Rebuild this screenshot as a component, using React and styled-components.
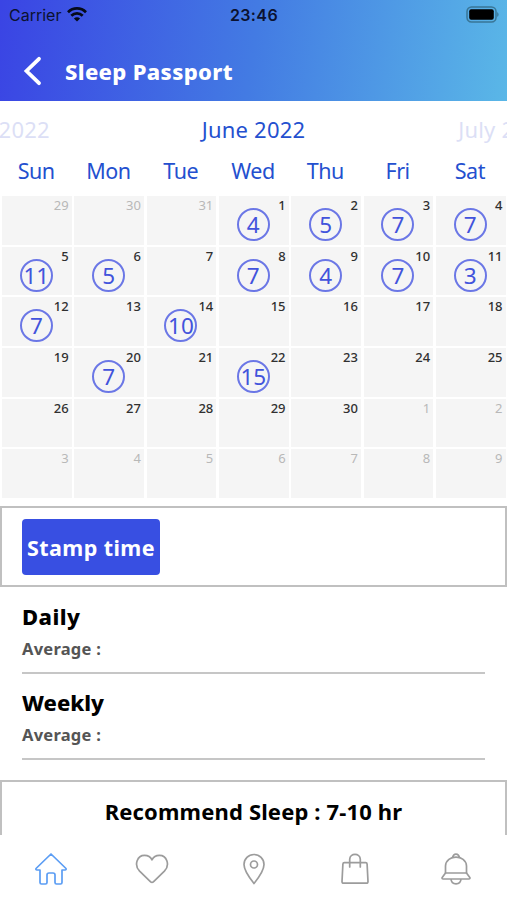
import styled, { createGlobalStyle } from 'styled-components';

const GlobalStyle = createGlobalStyle`
  * {
    box-sizing: border-box;
  }

  body {
    margin: 0;
    background-color: #fff;
    font-family: 'Noto Sans', sans-serif;
  }
`;

const Screen = styled.div`
  display: flex;
  flex-direction: column;
  width: 507px;
  height: 900px;
  overflow: hidden;
`;

const Header = styled.header`
  height: 101px;
  flex-shrink: 0;
  background: linear-gradient(98deg, #3a44e4 0%, #437be3 50%, #5ab7e7 100%);
`;

const StatusBar = styled.div`
  display: grid;
  grid-template-columns: 1fr auto 1fr;
  align-items: center;
  height: 30px;
  padding: 0 8px 0 9px;
  font-family: Inter, sans-serif;
  font-size: 16px;
  line-height: 30px;
  color: #0b1230;
`;

const Carrier = styled.div`
  display: flex;
  align-items: center;
  gap: 6px;
`;

const Clock = styled.span`
  font-weight: 600;
  letter-spacing: 0.4px;
`;

const BatteryIcon = styled.svg`
  justify-self: end;
`;

const TitleBar = styled.div`
  display: flex;
  align-items: center;
  height: 82px;
  padding-left: 23px;
  gap: 23px;
`;

const Title = styled.h1`
  margin: 0;
  color: #fff;
  font-size: 22px;
  font-weight: 800;
  line-height: 30px;
  letter-spacing: 0.35px;
`;

const Months = styled.div`
  display: grid;
  grid-template-columns: 1fr auto 1fr;
  height: 59px;
  flex-shrink: 0;
  font-size: 22px;
  line-height: 57px;
  letter-spacing: 0.2px;
  white-space: nowrap;
  overflow: hidden;
`;

const Month = styled.span`
  color: ${(p) => (p.$current ? '#2450cf' : '#dcdff6')};
  min-width: 0;
`;

const PrevMonth = styled(Month)`
  display: flex;
  justify-content: flex-end;
  padding-right: 152px;
`;

const NextMonth = styled(Month)`
  padding-left: 153px;
`;

const WeekRow = styled.div`
  display: grid;
  grid-template-columns: repeat(7, 1fr);
  height: 36px;
  flex-shrink: 0;
  padding-right: 1px;
  color: #2450cf;
  font-size: 21.5px;
  line-height: 22px;
  letter-spacing: -0.5px;
  text-align: center;
`;

const Days = styled.div`
  display: grid;
  grid-template-columns: repeat(7, 1fr);
  grid-template-rows: repeat(6, 1fr);
  gap: 2.2px 2.7px;
  height: 302px;
  flex-shrink: 0;
  padding: 0 1.5px 0 2px;
`;

const Day = styled.div`
  display: flex;
  flex-direction: column;
  background-color: #f5f5f5;
  min-height: 0;
`;

const DayNumber = styled.span`
  align-self: flex-end;
  height: 12px;
  padding-right: 3px;
  font-size: 13px;
  font-weight: ${(p) => (p.$muted ? 400 : 500)};
  line-height: 18px;
  color: ${(p) => (p.$muted ? '#b8b8b8' : '#303030')};
`;

const Hours = styled.span`
  display: flex;
  align-items: center;
  justify-content: center;
  align-self: center;
  width: 33px;
  height: 33px;
  flex-shrink: 0;
  border: 2px solid #6b77e6;
  border-radius: 50%;
  color: #4253dc;
  font-size: 22.5px;
  line-height: 29px;
  margin-right: 1px;
`;

const StampBox = styled.section`
  height: 81px;
  flex-shrink: 0;
  margin-top: 8px;
  padding: 11px 20px;
  border: 2px solid #c0c0c0;
`;

const StampButton = styled.button`
  display: block;
  width: 138px;
  height: 56px;
  padding: 1px 0 0;
  border: 0;
  border-radius: 4px;
  background-color: #384fe2;
  color: #fff;
  font-family: inherit;
  font-size: 21.5px;
  font-weight: 700;
  letter-spacing: 0.4px;
`;

const Averages = styled.div`
  padding: 0 22px;
  height: 193px;
  flex-shrink: 0;
`;

const Average = styled.section`
  height: ${(p) => p.$height}px;
  border-bottom: 2px solid #c6c6c6;
`;

const AverageTitle = styled.h2`
  margin: 0;
  padding-top: ${(p) => p.$top}px;
  color: #000;
  font-size: 22px;
  font-weight: 800;
  line-height: 30px;
  letter-spacing: ${(p) => p.$spacing}px;
`;

const AverageText = styled.p`
  margin: 5px 0 0;
  color: #555;
  font-size: 16.5px;
  font-weight: 700;
  line-height: 26px;
  letter-spacing: 0.25px;
`;

const Recommend = styled.div`
  height: 55px;
  flex-shrink: 0;
  border: 2px solid #c0c0c0;
  border-bottom: 0;
  color: #000;
  font-size: 22px;
  font-weight: 700;
  line-height: 59px;
  letter-spacing: 0.15px;
  text-align: center;
  white-space: nowrap;
`;

const TabBar = styled.nav`
  display: grid;
  grid-template-columns: repeat(5, 1fr);
  align-items: center;
  justify-items: center;
  height: 65px;
  padding-top: 3px;
`;

const TabIcon = styled.svg`
  width: 34px;
  height: 34px;
  fill: none;
  stroke: ${(p) => (p.$active ? '#5b9df4' : '#9c9c9c')};
  stroke-width: 1.7;
  stroke-linejoin: round;
  stroke-linecap: round;
`;

const weekdays = ['Sun', 'Mon', 'Tue', 'Wed', 'Thu', 'Fri', 'Sat'];

const sleepHours = {
  1: 4, 2: 5, 3: 7, 4: 7, 5: 11, 6: 5, 8: 7,
  9: 4, 10: 7, 11: 3, 12: 7, 14: 10, 20: 7, 22: 15,
};

// Six weeks starting on Sunday, May 29
const days = Array.from({ length: 42 }, (_, i) => {
  if (i < 3) return { day: 29 + i, muted: true };
  if (i > 32) return { day: i - 32, muted: true };
  return { day: i - 2, hours: sleepHours[i - 2] };
});

function Battery() {
  return (
    <BatteryIcon width="33" height="18" viewBox="0 0 33 18">
      <rect x="1" y="1" width="29" height="15" rx="4.5" fill="none" stroke="#397697" strokeWidth="1.5" />
      <rect x="3.2" y="3.2" width="24.6" height="10.6" rx="2" fill="#000" />
      <path d="M31.2 6.2v4.6c1.8-.7 1.8-3.9 0-4.6Z" fill="#397697" />
    </BatteryIcon>
  );
}

function App() {
  return (
    <>
      <GlobalStyle />
      <Screen>
        <Header>
          <StatusBar>
            <Carrier>
              Carrier
              <svg width="20" height="16" viewBox="0 0 20 16" fill="none" stroke="#050a18" strokeWidth="2.7">
                <path d="M1 5.2C6.1.2 13.9.2 19 5.2" />
                <path d="M4.3 8.8C7.5 5.6 12.5 5.6 15.7 8.8" />
                <path d="M6.9 11.4C8.7 9.7 11.3 9.7 13.1 11.4L10 14.5Z" fill="#050a18" stroke="none" />
              </svg>
            </Carrier>
            <Clock>23:46</Clock>
            <Battery />
          </StatusBar>
          <TitleBar>
            <svg width="19" height="30" viewBox="0 0 19 30" fill="none" stroke="#fff" strokeWidth="3.8">
              <path d="M16 2.8L3.5 15L16 27.2" strokeLinecap="round" />
            </svg>
            <Title>Sleep Passport</Title>
          </TitleBar>
        </Header>

        <Months>
          <PrevMonth>May 2022</PrevMonth>
          <Month $current>June 2022</Month>
          <NextMonth>July 2022</NextMonth>
        </Months>
        <WeekRow>
          {weekdays.map((name) => (
            <span key={name}>{name}</span>
          ))}
        </WeekRow>
        <Days>
          {days.map(({ day, muted, hours }, i) => (
            <Day key={i}>
              <DayNumber $muted={muted}>{day}</DayNumber>
              {hours && <Hours>{hours}</Hours>}
            </Day>
          ))}
        </Days>

        <StampBox>
          <StampButton>Stamp time</StampButton>
        </StampBox>

        <Averages>
          <Average $height={87}>
            <AverageTitle $top={14} $spacing={0.45}>Daily</AverageTitle>
            <AverageText>Average :</AverageText>
          </Average>
          <Average $height={86}>
            <AverageTitle $top={13} $spacing={0}>Weekly</AverageTitle>
            <AverageText>Average :</AverageText>
          </Average>
        </Averages>

        <Recommend>Recommend Sleep : 7-10 hr</Recommend>

        <TabBar>
          <TabIcon $active viewBox="0 0 34 34">
            <path d="M17 2L32 16.5Q32.5 18 31 18H28V30.5Q28 32 26.5 32H22.5Q21 32 21 30.5V23Q21 21 19 21H15Q13 21 13 23V30.5Q13 32 11.5 32H7.5Q6 32 6 30.5V18H3Q1.5 18 2 16.5Z" />
          </TabIcon>
          <TabIcon viewBox="0 0 34 34">
            <path d="M17 30.5Q15.8 30.3 14.6 28.9L4.6 19.2C-1.5 12.6 2.5 3.2 9.7 3.4C12.9 3.5 15.5 4.9 17 7.8C18.5 4.9 21.1 3.5 24.3 3.4C31.5 3.2 35.5 12.6 29.4 19.2L19.4 28.9Q18.2 30.3 17 30.5Z" />
          </TabIcon>
          <TabIcon viewBox="-1 0 34 34">
            <path d="M17 31.5C13 26.5 7 18.5 7 12.5C7 6.7 11.5 2.5 17 2.5S27 6.7 27 12.5C27 18.5 21 26.5 17 31.5Z" />
            <circle cx="17" cy="12.5" r="3.5" />
          </TabIcon>
          <TabIcon viewBox="0 0 34 34">
            <path d="M6.3 10.7H27.7Q29 10.7 29.1 12L30 29.5Q30 31.2 28.3 31.2H5.7Q4 31.2 4 29.5L4.9 12Q5 10.7 6.3 10.7Z" />
            <path d="M11.7 15V7.3C12 .8 22 .8 22.3 7.3V15" />
          </TabIcon>
          <TabIcon viewBox="0 0 34 34">
            <path d="M13.8 5.8C13.4.9 20.6.9 20.2 5.8M6.5 21V14C7 2.2 27 2.2 27.5 14V21" />
            <path d="M6.5 21H27.5L30.8 25.4Q31.4 27 29.8 27H4.2Q2.6 27 3.2 25.4ZM12 27C12.4 33.5 21.6 33.5 22 27" />
          </TabIcon>
        </TabBar>
      </Screen>
    </>
  );
}

export default App;
